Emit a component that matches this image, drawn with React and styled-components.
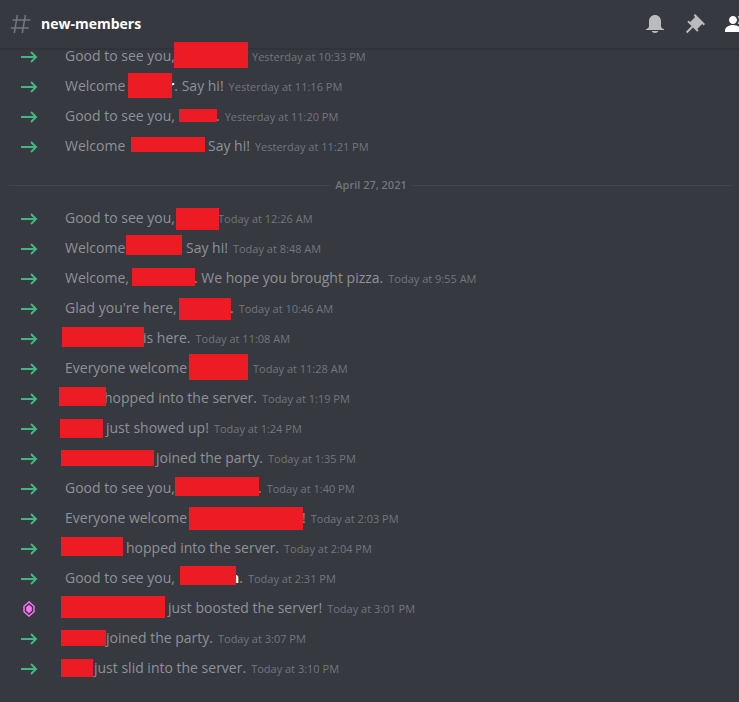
import React from 'react';
import styled, { createGlobalStyle } from 'styled-components';

const GlobalStyles = createGlobalStyle`
body {
  margin: 0;
  background-color: #36393f;
  font-family: "Open Sans", "Liberation Sans", sans-serif;
  overflow-x: hidden;
}
`;

const Page = styled.div`
  min-height: 100vh;
  overflow: hidden;
  background-color: #36393f;
`;

const Header = styled.header`
  display: flex;
  align-items: center;
  height: 48px;
  padding-left: 8px;
  border-bottom: 2px solid #303338;
`;

const ChannelName = styled.h1`
  flex: 1;
  margin: 0 0 0 9px;
  font-size: 14px;
  line-height: 20px;
  font-weight: 700;
  color: #fff;
`;

const Toolbar = styled.div`
  display: flex;
  gap: 16px;
  margin-right: -8px;
`;

const ToolButton = styled.button`
  width: 24px;
  height: 24px;
  padding: 0;
  border: none;
  background: none;
  color: ${(props) => (props.$active ? '#fff' : '#b9bbbe')};
  cursor: pointer;
`;

const Icon = styled.svg`
  display: block;
  width: ${(props) => props.$size}px;
  height: ${(props) => props.$size}px;
  flex: none;
`;

// The list is scrolled a little way under the header
const Messages = styled.main`
  margin-top: -9px;
`;

const MessageList = styled.ul`
  margin: 0;
  padding: 0;
  list-style: none;
`;

const Row = styled.li`
  position: relative;
  display: flex;
  align-items: center;
  height: 30px;
  padding-left: 20px;
`;

const Content = styled.div`
  display: flex;
  align-items: baseline;
  margin-left: 27px;
  font-size: 14px;
  line-height: 22px;
  color: #8e9297;
  white-space: pre;
`;

const Lead = styled.span`
  width: ${(props) => props.$width}px;
`;

const NameEnd = styled.strong`
  color: #fff;
  font-weight: 700;
`;

const Time = styled.time`
  margin-left: 5px;
  font-size: 11px;
  color: #72767d;
`;

const Cover = styled.span`
  position: absolute;
  left: ${(props) => props.$box[0]}px;
  top: ${(props) => props.$box[1]}px;
  width: ${(props) => props.$box[2]}px;
  height: ${(props) => props.$box[3]}px;
  background-color: #ed1c24;
`;

const Divider = styled.div`
  display: flex;
  align-items: center;
  gap: 4px;
  margin: 16px 6px 10px 9px;
  font-size: 11px;
  line-height: 16px;
  font-weight: 600;
  color: #72767d;

  &::before,
  &::after {
    content: '';
    flex: 1;
    height: 1px;
    background-color: #42454a;
  }
`;

// lead: width of the opening words plus the hidden name
// cover: left, top, width, height inside the row
const yesterday = [
  { before: 'Good to see you,', lead: 182, after: '', time: 'Yesterday at 10:33 PM', cover: [174, 1, 74, 26] },
  { before: 'Welcome', lead: 103, nameEnd: 'r', after: '. Say hi!', time: 'Yesterday at 11:16 PM', cover: [128, 2, 44, 25] },
  { before: 'Good to see you,', lead: 151, after: '.', time: 'Yesterday at 11:20 PM', cover: [179, 8, 38, 13] },
  { before: 'Welcome', lead: 143, after: 'Say hi!', time: 'Yesterday at 11:21 PM', cover: [131, 6, 74, 15] },
];

const today = [
  { before: 'Good to see you,', lead: 148, after: '', time: 'Today at 12:26 AM', cover: [176, 5, 43, 22] },
  { before: 'Welcome', lead: 121, after: 'Say hi!', time: 'Today at 8:48 AM', cover: [126, 2, 56, 20] },
  { before: 'Welcome,', lead: 129, after: '. We hope you brought pizza.', time: 'Today at 9:55 AM', cover: [132, 5, 63, 18] },
  { before: "Glad you're here,", lead: 165, after: '.', time: 'Today at 10:46 AM', cover: [179, 5, 52, 22] },
  { before: '', lead: 78, after: 'is here.', time: 'Today at 11:08 AM', cover: [62, 4, 82, 20] },
  { before: 'Everyone welcome', lead: 183, after: '', time: 'Today at 11:28 AM', cover: [189, 1, 59, 26] },
  { before: '', lead: 39, after: 'hopped into the server.', time: 'Today at 1:19 PM', cover: [59, 4, 47, 19] },
  { before: '', lead: 41, after: 'just showed up!', time: 'Today at 1:24 PM', cover: [60, 6, 43, 19] },
  { before: '', lead: 91, after: 'joined the party.', time: 'Today at 1:35 PM', cover: [61, 7, 93, 16] },
  { before: 'Good to see you,', lead: 193, after: '.', time: 'Today at 1:40 PM', cover: [175, 4, 84, 19] },
  { before: 'Everyone welcome', lead: 237, after: '!', time: 'Today at 2:03 PM', cover: [189, 4, 114, 23] },
  { before: '', lead: 61, after: 'hopped into the server.', time: 'Today at 2:04 PM', cover: [61, 4, 62, 19] },
  { before: 'Good to see you,', lead: 165, nameEnd: 'n', after: '.', time: 'Today at 2:31 PM', cover: [180, 3, 56, 19] },
  { before: '', lead: 103, after: 'just boosted the server!', time: 'Today at 3:01 PM', cover: [61, 3, 104, 22], boost: true },
  { before: '', lead: 41, after: 'joined the party.', time: 'Today at 3:07 PM', cover: [61, 7, 45, 16] },
  { before: '', lead: 29, after: 'just slid into the server.', time: 'Today at 3:10 PM', cover: [61, 6, 32, 18] },
];

const HashIcon = () => (
  <Icon $size={24} viewBox="0 0 24 24" fill="none" stroke="#72767d" strokeWidth="1.5" aria-hidden="true">
    <path d="M9.4 3L6.3 21M17.4 3L14.3 21M4.5 8H22.5M2.8 16H20.8" />
  </Icon>
);

const BellIcon = () => (
  <Icon $size={24} viewBox="0 0 24 24" fill="currentColor" aria-hidden="true">
    <path d="M18 9V14C18 15.657 19.344 17 21 17V18H3V17C4.656 17 6 15.657 6 14V9C6 5.686 8.686 3 12 3C15.314 3 18 5.686 18 9ZM12 21C10.524 21 9.248 20.19 8.555 19H15.445C14.752 20.19 13.476 21 12 21Z" />
  </Icon>
);

const PinIcon = () => (
  <Icon $size={24} viewBox="0 0 24 24" fill="currentColor" aria-hidden="true">
    <path d="M22 12L12.101 2.101L10.686 3.514L12.101 4.929L7.151 9.878V9.88L5.736 8.465L4.322 9.88L8.565 14.122L2.908 19.778L4.322 21.192L9.979 15.536L14.222 19.778L15.636 18.364L14.222 16.95L19.171 12H19.172L20.586 13.414L22 12Z" />
  </Icon>
);

const MembersIcon = () => (
  <Icon $size={24} viewBox="0 0 24 24" fill="currentColor" aria-hidden="true">
    <path d="M14 8.006C14 10.211 12.206 12.006 10 12.006C7.795 12.006 6 10.211 6 8.006C6 5.801 7.794 4.006 10 4.006C12.206 4.006 14 5.801 14 8.006ZM2 19.006C2 15.473 5.29 13.006 10 13.006C14.711 13.006 18 15.473 18 19.006V20.006H2V19.006Z" />
    <path d="M14.883 11.908C16.666 11.504 18 9.908 18 8.006C18 5.969 16.469 4.282 14.497 4.037C15.432 5.095 16 6.485 16 8.006C16 9.449 15.489 10.774 14.638 11.81L14.883 11.908ZM20 20.006H22V19.006C22 16.443 20.27 14.442 17.521 13.535C19.062 14.913 20 16.806 20 19.006V20.006Z" />
  </Icon>
);

const JoinIcon = () => (
  <Icon $size={18} viewBox="0 0 18 18" fill="none" stroke="#43b581" strokeWidth="2" aria-hidden="true">
    <path d="M1 10H16M11 5L16 10L11 15" />
  </Icon>
);

const BoostIcon = () => (
  <Icon $size={18} viewBox="0 0 18 18" aria-hidden="true">
    <path d="M9 2.9L14 7.2V12.8L9 17.1L4 12.8V7.2Z" fill="none" stroke="#ff73fa" strokeWidth="1.4" />
    <path d="M9 5.8L11.8 8.2V11.8L9 14.2L6.2 11.8V8.2Z" fill="#ff73fa" />
  </Icon>
);

const Message = ({ message }) => (
  <Row>
    {message.boost ? <BoostIcon /> : <JoinIcon />}
    <Content>
      <Lead $width={message.lead}>{message.before}</Lead>
      {message.nameEnd && <NameEnd>{message.nameEnd}</NameEnd>}
      <span>{message.after}</span>
      <Time>{message.time}</Time>
    </Content>
    <Cover $box={message.cover} />
  </Row>
);

const App = () => {
  return (
    <>
      <GlobalStyles />
      <Page>
        <Header>
          <HashIcon />
          <ChannelName>new-members</ChannelName>
          <Toolbar>
            <ToolButton type="button" aria-label="Notifications"><BellIcon /></ToolButton>
            <ToolButton type="button" aria-label="Pinned messages"><PinIcon /></ToolButton>
            <ToolButton type="button" aria-label="Members" $active><MembersIcon /></ToolButton>
          </Toolbar>
        </Header>
        <Messages>
          <MessageList>
            {yesterday.map((message) => (
              <Message key={message.time} message={message} />
            ))}
          </MessageList>
          <Divider>April 27, 2021</Divider>
          <MessageList>
            {today.map((message) => (
              <Message key={message.time} message={message} />
            ))}
          </MessageList>
        </Messages>
      </Page>
    </>
  );
};

export default App;
